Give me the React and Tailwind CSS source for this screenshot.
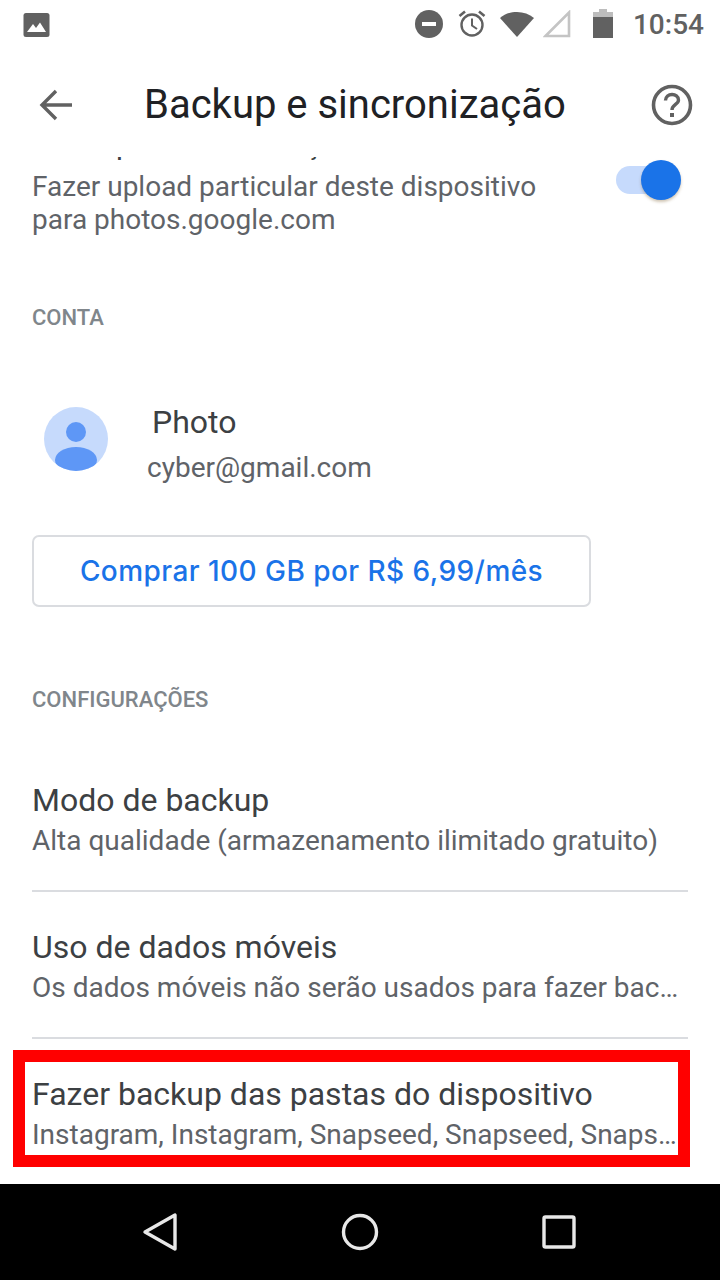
// App.jsx
const roboto = "font-['Roboto',sans-serif]";

function SettingRow({ title, sub, divider }) {
  return (
    <div className={`h-[147px] pt-[35px] ${divider ? "border-b-2 border-[#dadce0]" : ""}`}>
      <div className="text-[32px] leading-[40px] text-[#3c4043] whitespace-nowrap">{title}</div>
      <div className="w-[648px] text-[28px] leading-[40px] text-[#5f6368] whitespace-nowrap truncate mt-[1px]">{sub}</div>
    </div>
  );
}

function SectionLabel({ children, className }) {
  return (
    <div className={`text-[22px] leading-[24px] font-medium text-[#80868b] ${className}`}>{children}</div>
  );
}

function StatusBar() {
  return (
    <div className="h-[48px] shrink-0 flex items-center pl-[23px] pr-[16px] bg-white">
      <svg width="27" height="24" viewBox="0 0 27 24" className="mt-[2px]">
        <rect x="0.5" y="0" width="26" height="24" rx="2.5" fill="#616161" />
        <path d="M4 19 L10 11 L13 15 L17 9.5 L23 19 Z" fill="#fff" />
      </svg>
      <div className="ml-auto flex items-center">
        <svg width="30" height="30" viewBox="0 0 30 30">
          <circle cx="15" cy="15" r="14" fill="#616161" />
          <rect x="8" y="13" width="14" height="4" fill="#fff" />
        </svg>
        <svg width="30" height="30" viewBox="0 0 30 30" className="ml-[13px]" fill="none" stroke="#616161">
          <circle cx="15" cy="16" r="10.5" strokeWidth="2.4" />
          <path d="M15 9.5 V16.5 L20 20" strokeWidth="2" />
          <path d="M2.5 7 L8 2.5 M27.5 7 L22 2.5" strokeWidth="2.6" />
        </svg>
        <svg width="36" height="28" viewBox="0 0 36 28" className="ml-[12px]">
          <path d="M18 27 L1 8 C10 0 26 0 35 8 Z" fill="#616161" />
        </svg>
        <svg width="28" height="28" viewBox="0 0 28 28" className="ml-[8px]" fill="none">
          <path d="M2.5 26 L26 2.5 V26 Z" stroke="#c4c4c4" strokeWidth="2.6" />
        </svg>
        <svg width="20" height="29" viewBox="0 0 20 29" className="ml-[22px] -mt-[2px]">
          <rect x="6" y="0" width="8" height="4" fill="#bdbdbd" />
          <rect x="0" y="3" width="20" height="5" fill="#bdbdbd" />
          <rect x="0" y="8" width="20" height="21" fill="#616161" />
        </svg>
        <span className="ml-[20px] text-[28px] leading-[48px] font-medium text-[#616161] mt-[2px]">10:54</span>
      </div>
    </div>
  );
}

function Toolbar() {
  return (
    <div className="h-[109px] shrink-0 flex items-center pl-[39px] pr-[27px] pt-[4px] bg-white">
      <svg width="34" height="32" viewBox="0 0 34 32" fill="none" stroke="#616161" strokeWidth="3.4">
        <path d="M33 16 H4 M17 2 L3 16 L17 30" />
      </svg>
      <div className="ml-[71px] text-[40px] leading-[48px] text-[#202124] whitespace-nowrap">Backup e sincronização</div>
      <svg width="42" height="42" viewBox="0 0 42 42" className="ml-auto" fill="none" stroke="#616161">
        <circle cx="21" cy="21" r="18.5" strokeWidth="3.6" />
        <path d="M14.5 16.5 C14.5 8.5 27.5 8.5 27.5 16 C27.5 20.5 21 20.5 21 26" strokeWidth="3.4" />
        <rect x="19" y="29" width="4" height="4" fill="#616161" stroke="none" />
      </svg>
    </div>
  );
}

function Toggle() {
  return (
    <div className="relative w-[65px] h-[40px] shrink-0">
      <div className="absolute left-0 top-[6px] w-[50px] h-[28px] rounded-full bg-[#c6dafc]" />
      <div className="absolute right-0 top-0 w-[40px] h-[40px] rounded-full bg-[#1a73e8] shadow-[0_2px_3px_rgba(120,90,40,0.35)]" />
    </div>
  );
}

function Avatar() {
  return (
    <svg width="64" height="64" viewBox="0 0 64 64" className="shrink-0">
      <defs>
        <clipPath id="avatarClip">
          <circle cx="32" cy="32" r="32" />
        </clipPath>
      </defs>
      <circle cx="32" cy="32" r="32" fill="#c6dafc" />
      <circle cx="32" cy="25" r="10" fill="#5e97f6" />
      <ellipse cx="32" cy="53" rx="21" ry="13" fill="#5e97f6" clipPath="url(#avatarClip)" />
    </svg>
  );
}

function NavBar() {
  return (
    <div className="h-[96px] shrink-0 bg-black flex items-center justify-center gap-[162px] pr-[2px]">
      <svg width="38" height="40" viewBox="0 0 38 40" fill="none" stroke="#e8e8e8" strokeWidth="3.4" strokeLinejoin="round">
        <path d="M34 3 V37 L4 20 Z" />
      </svg>
      <svg width="38" height="38" viewBox="0 0 38 38" fill="none" stroke="#e8e8e8" strokeWidth="3.4">
        <circle cx="19" cy="19" r="16.5" />
      </svg>
      <svg width="36" height="36" viewBox="0 0 36 36" fill="none" stroke="#e8e8e8" strokeWidth="3.4" strokeLinejoin="round">
        <rect x="3" y="3" width="30" height="30" rx="1.5" />
      </svg>
    </div>
  );
}

export default function App() {
  return (
    <div className={`relative w-[720px] h-[1280px] flex flex-col bg-white overflow-hidden ${roboto}`}>
      <StatusBar />
      <Toolbar />
      <div className="flex-1 min-h-0 overflow-hidden px-[32px]">
        {/* list is scrolled a bit, only the descenders of the first line show */}
        <div className="-mt-[33px]">
          <div className="flex">
            <div className="flex-1">
              <div className="text-[30px] leading-[40px] tracking-[0.3px] text-[#3c4043] whitespace-nowrap">Backup e sincronização</div>
              <div className="text-[28px] leading-[33px] text-[#5f6368] mt-[6px]">
                Fazer upload particular deste dispositivo
                <br />
                para photos.google.com
              </div>
            </div>
            <div className="mr-[7px] mt-[36px]">
              <Toggle />
            </div>
          </div>

          <SectionLabel className="mt-[70px]">CONTA</SectionLabel>

          <div className="flex items-start mt-[77px] pl-[12px]">
            <Avatar />
            <div className="ml-[39px] -mt-[5px]">
              <div className="text-[32px] leading-[40px] text-[#3c4043] ml-[5px]">Photo</div>
              <div className="text-[28px] leading-[40px] text-[#5f6368] mt-[6px]">cyber@gmail.com</div>
            </div>
          </div>

          <div className="mt-[47px] w-[559px] h-[72px] rounded-[7px] border-2 border-[#dadce0] flex items-center justify-center font-['Inter',sans-serif] text-[28px] tracking-[0.45px] font-medium text-[#1a73e8] whitespace-nowrap">
            Comprar 100 GB por R$ 6,99/mês
          </div>

          <SectionLabel className="mt-[81px]">CONFIGURAÇÕES</SectionLabel>

          <div className="mt-[33px] w-[656px]">
            <SettingRow title="Modo de backup" sub="Alta qualidade (armazenamento ilimitado gratuito)" divider />
            <SettingRow title="Uso de dados móveis" sub="Os dados móveis não serão usados para fazer backup" divider />
            <SettingRow title="Fazer backup das pastas do dispositivo" sub="Instagram, Instagram, Snapseed, Snapseed, Snapseed" />
          </div>
        </div>
      </div>
      <NavBar />
      {/* red highlight drawn on top of the screenshot */}
      <div className="absolute left-[13px] top-[1050px] w-[677px] h-[117px] border-[12px] border-[#ff0000]" />
    </div>
  );
}
